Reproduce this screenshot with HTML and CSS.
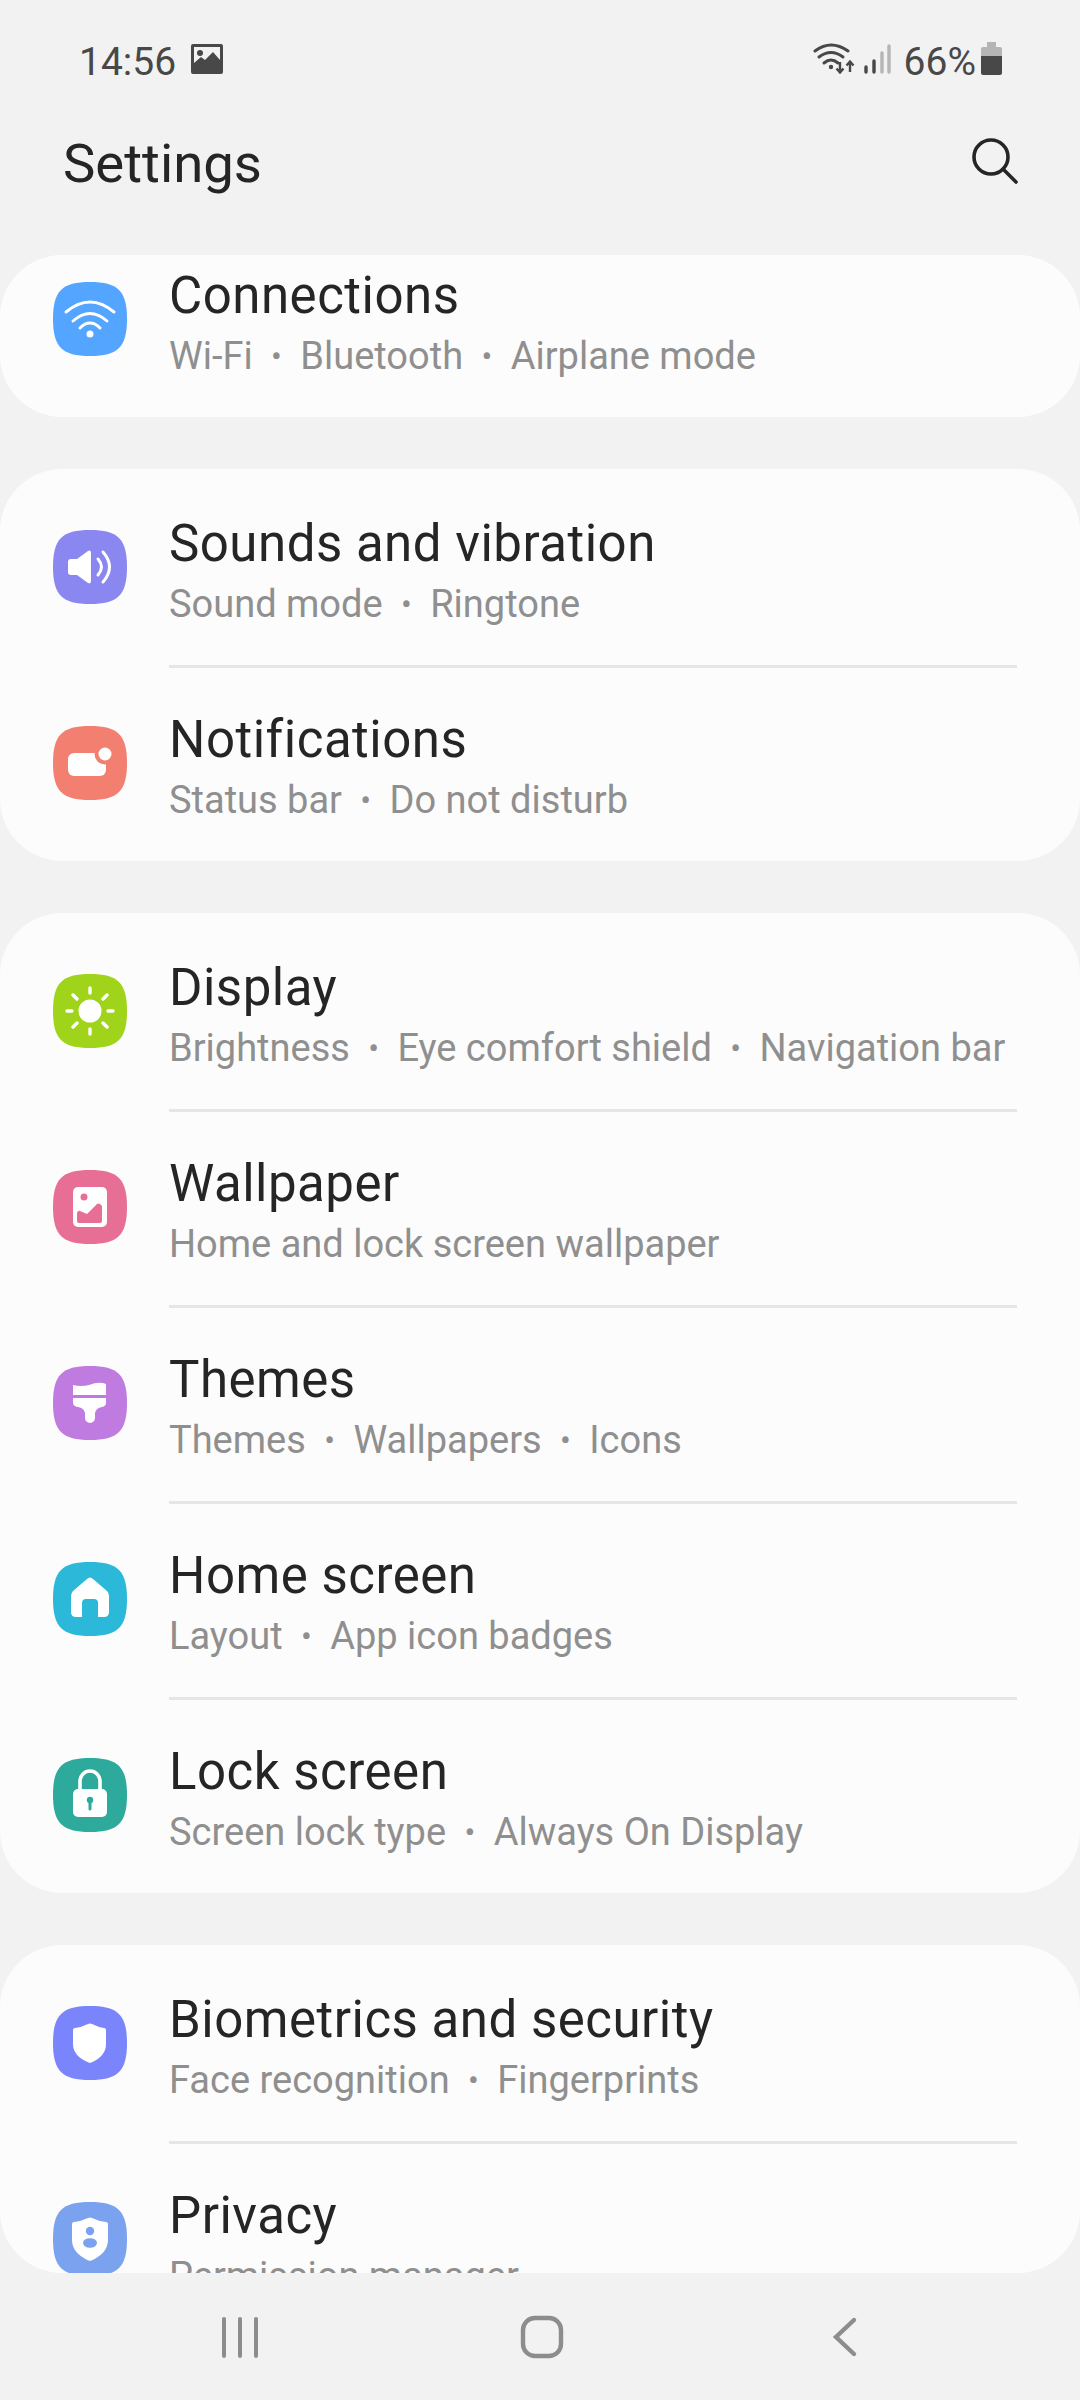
FILE: index.html
```html
<!DOCTYPE html>
<html lang="en">
<head>
<meta charset="utf-8">
<title>Settings</title>
<link rel="stylesheet" href="styles.css">
</head>
<body>
<div class="screen">
  <div class="status">
    <div class="status-left">
      <span class="clock">14:56</span>
      <svg class="st-pic" viewBox="0 0 32 30"><path fill="#484848" fill-rule="evenodd" d="M2 0H30Q32 0 32 2V28Q32 30 30 30H2Q0 30 0 28V2Q0 0 2 0ZM3 3V19L10 13 14 16 22 8 29 16V3Z"/><circle cx="9" cy="9" r="3" fill="#484848"/></svg>
    </div>
    <div class="status-right">
      <svg class="st-wifi" viewBox="0 0 42 32" fill="none" stroke="#484848" stroke-width="3" stroke-linecap="round"><path d="M2 9Q18 -3 35 9"/><path d="M6 15Q18 6 30 15"/><path d="M11 21Q18 15 25 21"/><circle cx="18" cy="25" r="2.2" fill="#484848" stroke="none"/><path stroke-width="2.4" stroke-linecap="butt" d="M27 20V30M23.5 26.5 27 30.5 30.500 26.500M37 30V20M33.500 23.500 37 19.500 40.500 23.500"/></svg>
      <svg class="st-signal" viewBox="0 0 27 30" stroke-width="3.400" stroke-linecap="round" fill="none"><path stroke="#484848" d="M2 23V28M10 17V28"/><path stroke="#b5b5b5" d="M18 9V28M25 2V28"/></svg>
      <span class="battery-text">66%</span>
      <svg class="st-batt" viewBox="0 0 21 33"><path fill="#b5b5b5" d="M6 0H15V5H19Q21 5 21 7V15H0V7Q0 5 2 5H6Z"/><path fill="#484848" d="M0 14H21V31Q21 33 19 33H2Q0 33 0 31Z"/></svg>
    </div>
  </div>
  <header class="header">
    <h1 class="title">Settings</h1>
    <svg class="search" viewBox="0 0 46 46" fill="none" stroke="#252525" stroke-width="3.600" stroke-linecap="round"><circle cx="19" cy="19" r="17"/><path d="M31 31 44 44"/></svg>
  </header>
  <main class="list">
    <section class="card card-scrolled">
      <div class="row">
        <svg class="ic" viewBox="0 0 74 74"><path fill="#54a5ff" d="M37 0C65 0 74 9 74 37S65 74 37 74 0 65 0 37 9 0 37 0Z"/><g fill="none" stroke="#fff" stroke-width="3" stroke-linecap="round"><path d="M13 30Q37 10 61 30"/><path d="M20 39Q37 24 54 39"/><path d="M27 46Q37 36 47 46"/></g><circle cx="37" cy="52" r="3.500" fill="#fff"/></svg>
        <div class="body"><div class="name">Connections</div><div class="sub">Wi-Fi<span class="dot">•</span>Bluetooth<span class="dot">•</span>Airplane mode</div></div>
      </div>
    </section>
    <section class="card">
      <div class="row">
        <svg class="ic" viewBox="0 0 74 74"><path fill="#8b87f0" d="M37 0C65 0 74 9 74 37S65 74 37 74 0 65 0 37 9 0 37 0Z"/><path fill="#fff" d="M18 29H24L35 21Q38 19.500 38 23V51Q38 54.500 35 53L24 45H18Q15 45 15 42V32Q15 29 18 29Z"/><g fill="none" stroke="#fff" stroke-width="3" stroke-linecap="round"><path d="M45 29Q52 37 45 45"/><path d="M50 22Q63 37 50 52"/></g></svg>
        <div class="body"><div class="name">Sounds and vibration</div><div class="sub">Sound mode<span class="dot">•</span>Ringtone</div></div>
      </div>
      <div class="row">
        <svg class="ic" viewBox="0 0 74 74"><path fill="#f27f70" d="M37 0C65 0 74 9 74 37S65 74 37 74 0 65 0 37 9 0 37 0Z"/><rect x="15" y="27" width="38" height="23" rx="6" fill="#fff"/><circle cx="52" cy="28" r="10.500" fill="#f27f70"/><circle cx="52" cy="28" r="6.500" fill="#fff"/></svg>
        <div class="body"><div class="name">Notifications</div><div class="sub">Status bar<span class="dot">•</span>Do not disturb</div></div>
      </div>
    </section>
    <section class="card">
      <div class="row">
        <svg class="ic" viewBox="0 0 74 74"><path fill="#9fd41a" d="M37 0C65 0 74 9 74 37S65 74 37 74 0 65 0 37 9 0 37 0Z"/><circle cx="37" cy="37" r="11.500" fill="#fff"/><path fill="none" stroke="#fff" stroke-width="3.400" stroke-linecap="round" d="M37 14V19M37 55V60M14 37H19M55 37H60M20 21 24 25M54 21 50 25M20 53 24 49M54 53 50 49"/></svg>
        <div class="body"><div class="name">Display</div><div class="sub">Brightness<span class="dot">•</span>Eye comfort shield<span class="dot">•</span>Navigation bar</div></div>
      </div>
      <div class="row">
        <svg class="ic" viewBox="0 0 74 74"><path fill="#e76f95" d="M37 0C65 0 74 9 74 37S65 74 37 74 0 65 0 37 9 0 37 0Z"/><rect x="20" y="17" width="34" height="40" rx="5" fill="#fff"/><circle cx="31" cy="27" r="3.500" fill="#e76f95"/><path fill="#e76f95" d="M24 43Q25 40 27 41L34 44 44 34Q45 33 47 34L49 36V51Q49 53 47 53H26Q24 53 24 51Z"/></svg>
        <div class="body"><div class="name">Wallpaper</div><div class="sub">Home and lock screen wallpaper</div></div>
      </div>
      <div class="row">
        <svg class="ic" viewBox="0 0 74 74"><path fill="#bf7bdf" d="M37 0C65 0 74 9 74 37S65 74 37 74 0 65 0 37 9 0 37 0Z"/><path fill="#fff" d="M20 19Q28 21 36 19 46 15 53 18V29H20Z"/><path fill="#fff" d="M20 32H53V37Q53 40 49 41 43 42 42 47V52A5 5 0 0 1 32 52V47Q31 42 25 41 20 40 20 37Z"/></svg>
        <div class="body"><div class="name">Themes</div><div class="sub">Themes<span class="dot">•</span>Wallpapers<span class="dot">•</span>Icons</div></div>
      </div>
      <div class="row">
        <svg class="ic" viewBox="0 0 74 74"><path fill="#2bb8d9" d="M37 0C65 0 74 9 74 37S65 74 37 74 0 65 0 37 9 0 37 0Z"/><path fill="#fff" d="M34 17Q37 14 40 17L54 29Q56 31 56 34V50Q56 55 51 55H45V41Q45 37 41 37H33Q29 37 29 41V55H23Q18 55 18 50V34Q18 31 20 29Z"/></svg>
        <div class="body"><div class="name">Home screen</div><div class="sub">Layout<span class="dot">•</span>App icon badges</div></div>
      </div>
      <div class="row">
        <svg class="ic" viewBox="0 0 74 74"><path fill="#2eaa9c" d="M37 0C65 0 74 9 74 37S65 74 37 74 0 65 0 37 9 0 37 0Z"/><rect x="20" y="31" width="34" height="28" rx="5" fill="#fff"/><path fill="none" stroke="#fff" stroke-width="3.600" d="M27 33V23A10 10 0 0 1 47 23V33"/><circle cx="37" cy="42" r="3.200" fill="#2eaa9c"/><path stroke="#2eaa9c" stroke-width="3" stroke-linecap="round" d="M37 43V51"/></svg>
        <div class="body"><div class="name">Lock screen</div><div class="sub">Screen lock type<span class="dot">•</span>Always On Display</div></div>
      </div>
    </section>
    <section class="card">
      <div class="row">
        <svg class="ic" viewBox="0 0 74 74"><path fill="#7a85fb" d="M37 0C65 0 74 9 74 37S65 74 37 74 0 65 0 37 9 0 37 0Z"/><path fill="#fff" d="M35 18Q37 17 39 18 45 21 51 22 53 22 53 24V38Q53 50 38.500 56.500 37 57 35.500 56.500 20 50 20 38V24Q20 22 22 22 29 21 35 18Z"/></svg>
        <div class="body"><div class="name">Biometrics and security</div><div class="sub">Face recognition<span class="dot">•</span>Fingerprints</div></div>
      </div>
      <div class="row">
        <svg class="ic" viewBox="0 0 74 74"><path fill="#7aa2ef" d="M37 0C65 0 74 9 74 37S65 74 37 74 0 65 0 37 9 0 37 0Z"/><path fill="#fff" d="M35 16Q37 15 39 16 45 19 53 20 55 20 55 22V38Q55 51 38.500 58.500 37 59 35.500 58.500 19 51 19 38V22Q19 20 21 20 29 19 35 16Z"/><circle cx="37" cy="29" r="4.200" fill="#7aa2ef"/><ellipse cx="37" cy="41" rx="7" ry="4.800" fill="#7aa2ef"/></svg>
        <div class="body"><div class="name">Privacy</div><div class="sub">Permission manager</div></div>
      </div>
    </section>
  </main>
  <nav class="nav">
    <svg class="nav-ic" viewBox="0 0 48 48" fill="none" stroke="#8d8d8d" stroke-width="4" stroke-linecap="round"><path d="M8 6V43M24 6V43M40 6V43"/></svg>
    <svg class="nav-ic" viewBox="0 0 48 48" fill="none" stroke="#8d8d8d" stroke-width="4.400"><rect x="5" y="5" width="38" height="38" rx="12"/></svg>
    <svg class="nav-ic" viewBox="0 0 48 48" fill="none" stroke="#8d8d8d" stroke-width="4.400" stroke-linecap="round" stroke-linejoin="miter"><path d="M33 7 15 24 33 41"/></svg>
  </nav>
</div>
</body>
</html>
```
FILE: styles.css
```css
* { box-sizing: border-box; }
html, body { margin: 0; padding: 0; }
body { width: 1080px; height: 2400px; background: #f2f2f2; font-family: Roboto, "Noto Sans", sans-serif; overflow: hidden; }
.screen { width: 1080px; height: 2400px; display: flex; flex-direction: column; }

.status { height: 116px; flex: none; display: flex; justify-content: space-between; align-items: flex-start; padding: 38px 78px 0 79px; color: #484848; }
.status-left, .status-right { display: flex; align-items: center; height: 44px; }
.clock { font-size: 39px; line-height: 44px; width: 94px; position: relative; top: 2px; }
.st-pic { width: 32px; height: 30px; margin-left: 18px; margin-top: -2px; }
.st-wifi { width: 42px; height: 32px; margin-top: -4px; }
.st-signal { width: 27px; height: 30px; margin-left: 9px; margin-top: -2px; }
.battery-text { font-size: 39px; line-height: 44px; margin-left: 13px; margin-right: 5px; position: relative; top: 2px; }
.st-batt { width: 21px; height: 33px; margin-top: -4px; }

.header { height: 139px; flex: none; display: flex; justify-content: space-between; align-items: flex-start; padding: 0 62px 0 63px; }
.title { margin: 0; font-size: 54.500px; line-height: 95px; font-weight: 400; color: #252525; }
.search { width: 46px; height: 46px; margin-top: 22px; }

.list { flex: 0 0 2018px; overflow: hidden; border-radius: 0 0 62px 62px; display: flex; flex-direction: column; gap: 52px; }
.card { flex: none; background: #fcfcfc; border-radius: 62px; overflow: hidden; }
.card-scrolled .row:first-child { margin-top: -34px; }
.row { height: 196px; display: flex; }
.ic { width: 74px; height: 74px; flex: none; align-self: center; margin: 0 42px 0 53px; }
.body { flex: 1; margin-right: 63px; display: flex; flex-direction: column; justify-content: center; border-top: 3px solid transparent; border-bottom: 3px solid transparent; }
.row + .row .body { border-top-color: #e6e6e6; }
.name { font-size: 51px; letter-spacing: 0.5px; line-height: 60px; color: #252525; white-space: nowrap; margin-bottom: 5px; margin-top: 9px; }
.sub { font-size: 38px; line-height: 50px; color: #8f8f8f; white-space: nowrap; }
.dot { display: inline-block; margin: 0 18.400px; font-size: 32px; vertical-align: 2px; }

.nav { flex: 1; display: grid; grid-template-columns: repeat(3, 302.5px); justify-content: center; justify-items: center; align-items: center; padding-left: 4px; }
.nav-ic { width: 48px; height: 48px; }
```
